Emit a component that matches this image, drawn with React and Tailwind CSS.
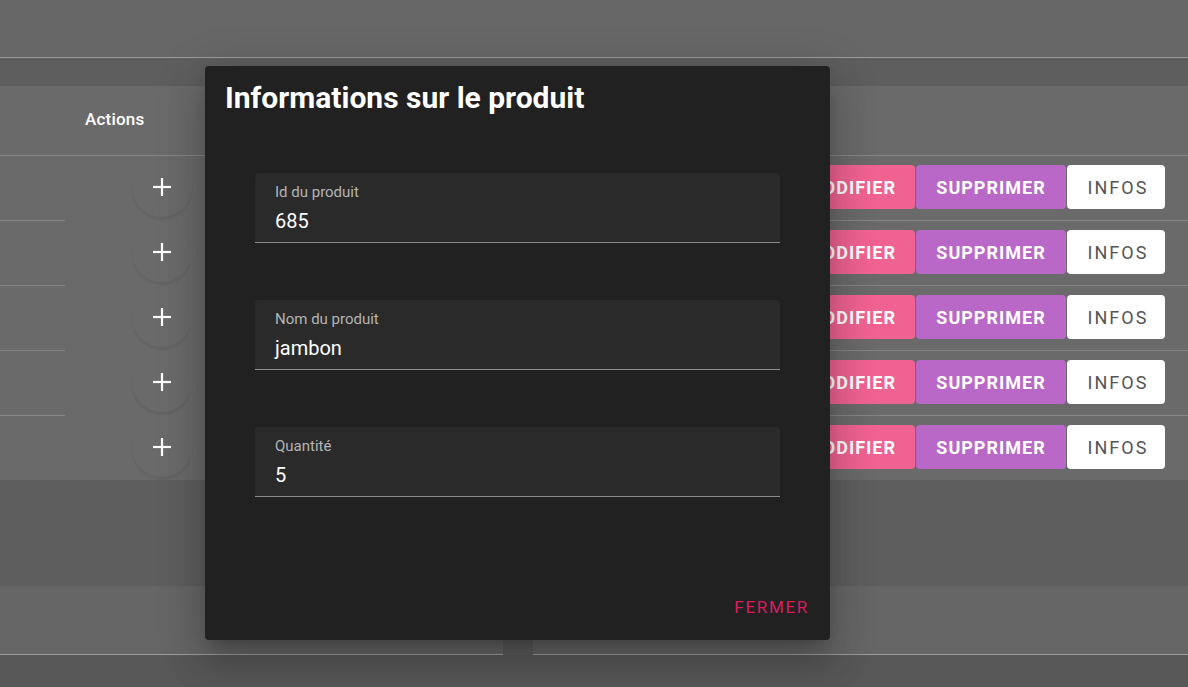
import React from 'react';

// Product list page with the "Informations sur le produit" dialog opened on top

const rows = [0, 1, 2, 3, 4];

const fields = [
  { label: 'Id du produit', value: '685' },
  { label: 'Nom du produit', value: 'jambon' },
  { label: 'Quantité', value: '5' },
];

function PlusIcon() {
  return (
    <svg width="20" height="20" viewBox="0 0 20 20" fill="none" stroke="#ffffff" strokeWidth="2.2">
      <line x1="10" y1="1" x2="10" y2="19" />
      <line x1="1" y1="10" x2="19" y2="10" />
    </svg>
  );
}

function Buttons() {
  return (
    <>
      <button className="h-[44px] w-[128px] rounded-[4px] bg-[#f06292] text-white font-bold text-[18px] tracking-[1px]">
        MODIFIER
      </button>
      <button className="h-[44px] w-[150px] rounded-[4px] bg-[#ba68c8] text-white font-bold text-[18px] tracking-[1px]">
        SUPPRIMER
      </button>
      <button className="h-[44px] w-[98px] rounded-[4px] bg-white text-[#555555] font-normal text-[18px] tracking-[2px] pl-[4px]">
        INFOS
      </button>
    </>
  );
}

function AddButton() {
  return (
    <div className="w-[60px] h-[60px] rounded-full bg-[#6a6a6a] shadow-[0_3px_2px_rgba(0,0,0,0.06)] flex items-center justify-center ml-[-1px]">
      <PlusIcon />
    </div>
  );
}

function Row({ first }) {
  return (
    <div className={`flex pb-[2px] ${first ? 'h-[64px]' : 'h-[65px]'}`}>
      <div className={`w-[65px] ${first ? '' : 'border-t border-[#858585]'}`} />
      <div className="w-[195px] flex items-center justify-center">
        <AddButton />
      </div>
      <div className={`flex-1 flex items-center justify-end pr-[23px] gap-px ${first ? '' : 'border-t border-[#858585]'}`}>
        <Buttons />
      </div>
    </div>
  );
}

function Field({ label, value }) {
  return (
    <div className="h-[70px] bg-[#2a2a2a] rounded-t-[4px] border-b border-[#8c8c8c] px-5 pt-[10px]">
      <div className="text-[15px] leading-[18px] text-[#b4b4b4]">{label}</div>
      <div className="text-[20px] leading-[26px] text-white mt-[7px]">{value}</div>
    </div>
  );
}

export default function App() {
  return (
    <div
      className="relative w-[1188px] h-[687px] overflow-hidden bg-[#666666]"
      style={{ fontFamily: 'Roboto, "Liberation Sans", sans-serif' }}
    >
      <div className="h-[58px] bg-[#676767] border-b border-[#9c9c9c]" />
      <div className="h-[28px] bg-[#5e5e5e]" />

      {/* product table */}
      <div className="bg-[#6a6a6a]">
        <div className="h-[69px] flex items-center pl-[85px] pb-[2px]">
          <span className="text-white font-medium text-[17px] tracking-[0.2px]">Actions</span>
        </div>
        <div className="border-t border-[#858585]">
          {rows.map(r => (
            <Row key={r} first={r === 0} />
          ))}
        </div>
      </div>

      <div className="h-[106px] bg-[#5e5e5e]" />
      <div className="h-[69px] bg-[#666666] border-b border-[#9c9c9c] flex justify-start">
        <div className="ml-[503px] mt-[53px] w-[30px] h-[16px] bg-[#5c5c5c]" />
      </div>
      <div className="h-[40px] bg-[#575757]" />

      {/* dialog */}
      <div className="absolute left-[205px] top-[66px] w-[625px] h-[574px] bg-[#212121] rounded-[4px] flex flex-col shadow-[0_11px_15px_-7px_rgba(0,0,0,0.2),0_24px_38px_3px_rgba(0,0,0,0.14),0_9px_46px_8px_rgba(0,0,0,0.12)]">
        <h2 className="px-5 pt-[12px] text-white font-bold text-[30px] leading-[40px]">
          Informations sur le produit
        </h2>
        <div className="px-[50px] pt-[55px] flex flex-col gap-[57px]">
          {fields.map(f => (
            <Field key={f.label} label={f.label} value={f.value} />
          ))}
        </div>
        <div className="mt-auto flex justify-end px-[21px] pb-[20px]">
          <button className="text-[#dc1c5f] font-normal text-[17px] tracking-[1.7px]">FERMER</button>
        </div>
      </div>
    </div>
  );
}
